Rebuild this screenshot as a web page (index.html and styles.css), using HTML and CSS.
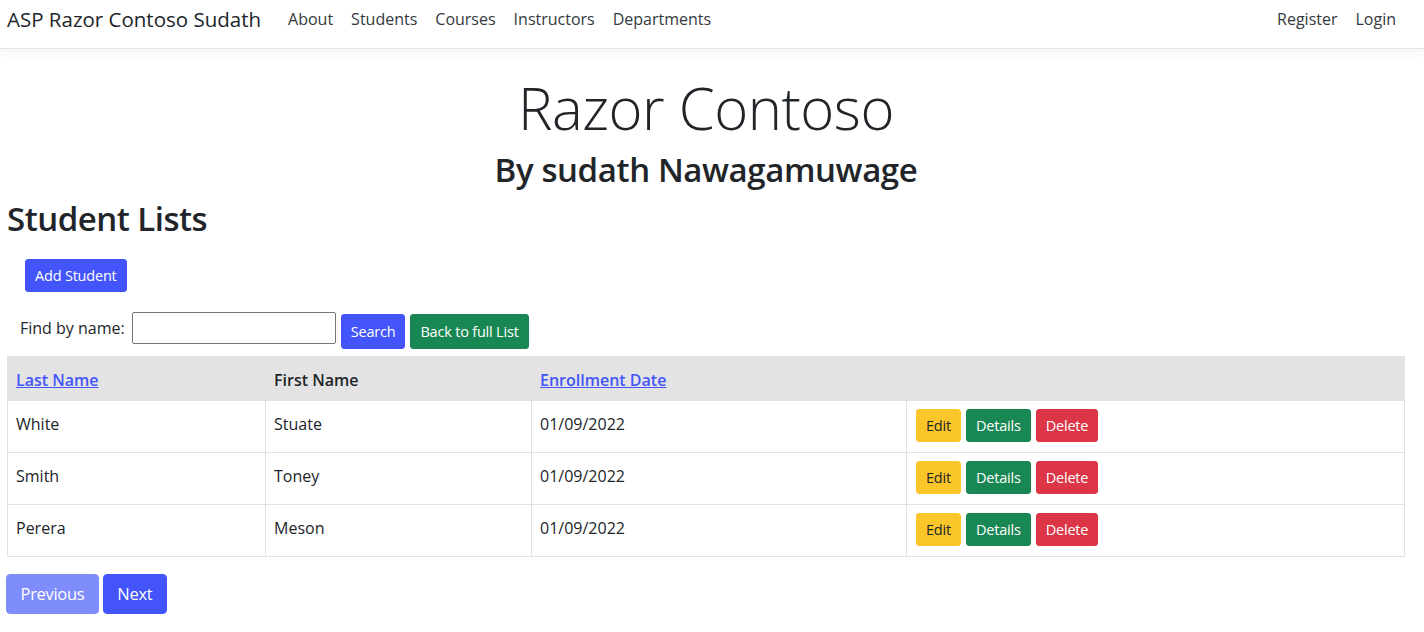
FILE: index.html
```html
<!DOCTYPE html>
<html lang="en">
<head>
<meta charset="utf-8">
<title>Razor Contoso</title>
<link rel="stylesheet" href="styles.css">
</head>
<body>
<header class="navbar">
  <a class="brand" href="#">ASP Razor Contoso Sudath</a>
  <nav class="nav-main">
    <a href="#">About</a>
    <a href="#">Students</a>
    <a href="#">Courses</a>
    <a href="#">Instructors</a>
    <a href="#">Departments</a>
  </nav>
  <nav class="nav-auth">
    <a href="#">Register</a>
    <a href="#">Login</a>
  </nav>
</header>
<main class="container">
  <div class="hero">
    <h1 class="display">Razor Contoso</h1>
    <h2 class="byline">By sudath Nawagamuwage</h2>
  </div>
  <h2 class="page-title">Student Lists</h2>
  <div class="add-row"><a class="btn btn-primary btn-add" href="#">Add Student</a></div>
  <form class="search-row">
    <label for="q">Find by name:</label>
    <input id="q" type="text">
    <button type="button" class="btn btn-primary">Search</button>
    <a class="btn btn-success" href="#">Back to full List</a>
  </form>
  <table class="table">
    <thead>
      <tr>
        <th class="c1"><a href="#">Last Name</a></th>
        <th class="c2">First Name</th>
        <th class="c3"><a href="#">Enrollment Date</a></th>
        <th></th>
      </tr>
    </thead>
    <tbody>
      <tr>
        <td>White</td><td>Stuate</td><td>01/09/2022</td>
        <td><div class="actions"><a class="btn btn-warning" href="#">Edit</a><a class="btn btn-success" href="#">Details</a><a class="btn btn-danger" href="#">Delete</a></div></td>
      </tr>
      <tr>
        <td>Smith</td><td>Toney</td><td>01/09/2022</td>
        <td><div class="actions"><a class="btn btn-warning" href="#">Edit</a><a class="btn btn-success" href="#">Details</a><a class="btn btn-danger" href="#">Delete</a></div></td>
      </tr>
      <tr>
        <td>Perera</td><td>Meson</td><td>01/09/2022</td>
        <td><div class="actions"><a class="btn btn-warning" href="#">Edit</a><a class="btn btn-success" href="#">Details</a><a class="btn btn-danger" href="#">Delete</a></div></td>
      </tr>
    </tbody>
  </table>
  <div class="pager">
    <a class="btn btn-primary btn-lg disabled" href="#">Previous</a>
    <a class="btn btn-primary btn-lg" href="#">Next</a>
  </div>
</main>
</body>
</html>
```
FILE: styles.css
```css
* { box-sizing: border-box; }
html, body { margin: 0; padding: 0; }
body {
  font-family: "Open Sans", "Noto Sans", sans-serif;
  font-size: 16px;
  color: #212529;
  background: #fff;
}
a { text-decoration: none; }

.navbar {
  height: 49px;
  display: flex;
  align-items: flex-start;
  padding: 0 19px 0 7px;
  border-bottom: 1px solid #e5e5e5;
  box-shadow: 0 4px 12px rgba(0,0,0,.05);
}
.brand {
  font-size: 20.5px;
  line-height: 38px;
  color: #212529;
  margin-right: 18px;
}
.nav-main, .nav-auth { display: flex; }
.nav-main a, .nav-auth a {
  color: #343a40;
  font-size: 16px;
  line-height: 38px;
  padding: 0 9px;
}
.nav-auth { margin-left: auto; }

.container { padding: 0 19px 0 7px; }

.hero { text-align: center; padding-top: 24px; }
.display {
  margin: 0;
  font-size: 58px;
  font-weight: 300;
  line-height: 1.2;
  letter-spacing: -0.5px;
}
.byline {
  margin: 7px 0 0;
  font-size: 33px;
  font-weight: 600;
  line-height: 1.2;
  letter-spacing: -0.4px;
}
.page-title {
  margin: 10px 0 0;
  font-size: 33px;
  font-weight: 600;
  line-height: 1.2;
  letter-spacing: -0.5px;
}

.btn {
  display: inline-block;
  font-family: inherit;
  font-size: 14.5px;
  line-height: 21px;
  padding: 5px 9px;
  border: 1px solid transparent;
  border-radius: 3px;
  color: #fff;
  cursor: pointer;
  letter-spacing: -0.2px;
}
.btn-primary { background: #4355fa; border-color: #4355fa; }
.btn-success { background: #198754; border-color: #198754; }
.btn-warning { background: #fbc62a; border-color: #fbc62a; color: #212529; }
.btn-danger { background: #dc3545; border-color: #dc3545; }
.btn-lg { font-size: 16.5px; line-height: 26px; padding: 6px 13.5px; border-radius: 4px; letter-spacing: -0.3px; }
.btn.disabled { background: #7f8cfc; border-color: #7f8cfc; }

.add-row { padding: 20px 0 0 18px; }

.search-row {
  display: flex;
  align-items: flex-start;
  gap: 5px;
  margin: 20px 0 7px 13px;
}
.search-row label { font-size: 16px; line-height: 32px; margin-right: 2px; }
.search-row input {
  width: 204px;
  height: 32px;
  border: 1px solid #767676;
  border-radius: 2px;
  margin: 0;
  font: inherit;
}
.search-row .btn { margin-top: 2px; padding: 6px 9px; }

.table {
  width: 100%;
  border-collapse: collapse;
  border: 1px solid #dee2e6;
}
.table th, .table td {
  border: 1px solid #dee2e6;
  text-align: left;
  vertical-align: top;
  padding: 11px 8px 8px;
  font-size: 16px;
  line-height: 24px;
  height: 52px;
}
.table thead th {
  background: #e3e3e3;
  font-weight: 600;
  height: 44px;
  padding-top: 11px;
  border-left-color: #e3e3e3;
  border-right-color: #e3e3e3;
}
.table thead th a { color: #4355fa; text-decoration: underline; }
.c1 { width: 258px; }
.c2 { width: 266px; }
.c3 { width: 375px; }
.table tbody td:last-child { padding: 8px 9px; }
.actions { display: flex; gap: 5px; }
.actions .btn { padding: 5px 9px; }

.pager { display: flex; gap: 4px; margin: 17px 0 0 -1px; }
```
